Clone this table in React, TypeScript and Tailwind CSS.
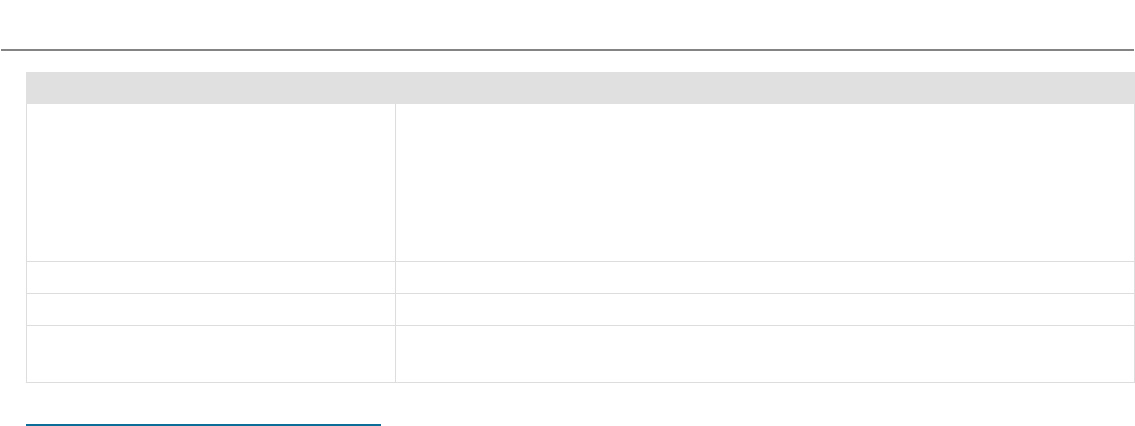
import React from "react";

export default function App() {
  const rows = [157, 31, 31, 56];
  return (
    <div className="w-[1135px] h-[426px] bg-white overflow-hidden font-['Liberation_Sans',sans-serif]">
      <div className="pt-[49px]">
        <div className="mx-[1px] h-[2px] bg-[#848484]" />
      </div>
      <div className="ml-[26px] mt-[21px] w-[1109px]">
        <div className="h-[32px] bg-[#e0e0e0]" />
        <div className="border-l border-r border-[#dddddd]">
          {rows.map((h, i) => (
            <div key={i} className="flex border-b border-[#dddddd]">
              <div className="w-[369px] border-r border-[#dddddd]" style={{ height: h }} />
              <div className="flex-1" />
            </div>
          ))}
        </div>
        <div className="mt-[41px] w-[355px] h-[2px] bg-[#0b6d98]" />
      </div>
    </div>
  );
}
